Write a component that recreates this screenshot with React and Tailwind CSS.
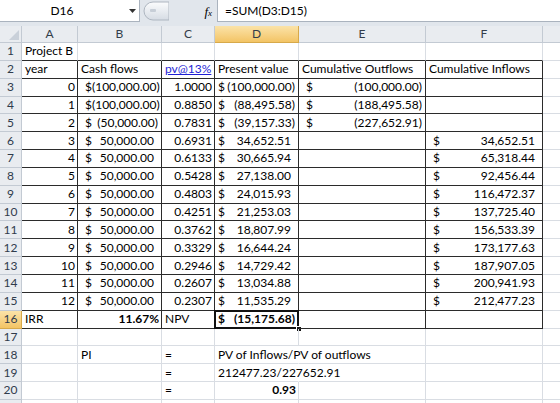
import React from 'react';

const FONT = { fontFamily: 'Lato, "Liberation Sans", sans-serif' };

const colW = ['w-[56px]', 'w-[84px]', 'w-[53px]', 'w-[84px]', 'w-[127px]', 'w-[117px]', 'w-[80px]'];
const letters = ['A', 'B', 'C', 'D', 'E', 'F', 'G'];

const years = [0, 1, 2, 3, 4, 5, 6, 7, 8, 9, 10, 11, 12];
const cash = ['(100,000.00)', '(100,000.00)', '(50,000.00)'];
const pvf = ['1.0000', '0.8850', '0.7831', '0.6931', '0.6133', '0.5428', '0.4803', '0.4251', '0.3762', '0.3329', '0.2946', '0.2607', '0.2307'];
const pv = ['(100,000.00)', '(88,495.58)', '(39,157.33)', '34,652.51', '30,665.94', '27,138.00', '24,015.93', '21,253.03', '18,807.99', '16,644.24', '14,729.42', '13,034.88', '11,535.29'];
const outflows = ['(100,000.00)', '(188,495.58)', '(227,652.91)'];
const inflows = ['34,652.51', '65,318.44', '92,456.44', '116,472.37', '137,725.40', '156,533.39', '173,177.63', '187,907.05', '200,941.93', '212,477.23'];

const money = (v, wide) => ({ money: v, neg: v.startsWith('('), wide });

const buildRows = () => {
    const rows = [];
    rows.push([{ t: 'Project B' }]);
    rows.push([
        { t: 'year' },
        { t: 'Cash flows' },
        { t: 'pv@13%', link: true },
        { t: 'Present value' },
        { t: 'Cumulative Outflows' },
        { t: 'Cumulative Inflows' },
    ]);
    years.forEach((y, i) => {
        rows.push([
            { t: String(y), r: true },
            money(i < 3 ? cash[i] : '50,000.00'),
            { t: pvf[i], r: true },
            money(pv[i], true),
            i < 3 ? money(outflows[i]) : {},
            i >= 3 ? money(inflows[i - 3]) : {},
        ]);
    });
    rows.push([
        { t: 'IRR' },
        { t: '11.67%', r: true, b: true },
        { t: 'NPV' },
        { ...money('(15,175.68)', true), b: true, sel: true },
        {},
        {},
    ]);
    rows.push([]);
    rows.push([{}, { t: 'PI' }, { t: '=' }, { t: 'PV of Inflows/PV of outflows', spill: true }]);
    rows.push([{}, {}, { t: '=' }, { t: '212477.23/227652.91', spill: true }]);
    rows.push([{}, {}, { t: '=' }, { t: '0.93', r: true, b: true }]);
    rows.push([]);
    return rows;
};

const Cell = ({ cell = {}, col, rowNo }) => {
    const inTable = col < 6 && rowNo >= 2 && rowNo <= 16;
    const aboveTable = col < 6 && rowNo === 1;
    let border = 'border-r border-b border-[#d9dde3]';
    if (inTable) border = 'border-r border-b border-[#2b2b2b]';
    else if (aboveTable) border = 'border-r border-b border-r-[#d9dde3] border-b-[#2b2b2b]';
    if (cell.spill) border = 'border-r border-b border-r-transparent border-b-[#d9dde3]';

    let content = null;
    if (cell.money) {
        const padL = cell.wide ? 'pl-[3px]' : 'pl-[7px]';
        const padR = cell.neg ? 'pr-[3px]' : 'pr-[7px]';
        content = (
            <div className={`flex justify-between w-full whitespace-nowrap ${padL} ${padR}`}>
                <span>$</span>
                <span>{cell.money}</span>
            </div>
        );
    } else if (cell.t) {
        content = (
            <div className={`w-full whitespace-nowrap ${cell.r ? 'text-right pr-[2px]' : 'pl-[3px]'} ${cell.link ? 'text-[#1f1fd6] underline' : ''}`}>
                {cell.t}
            </div>
        );
    }

    return (
        <div className={`relative shrink-0 h-full flex items-center ${colW[col]} ${border} ${cell.b ? 'font-bold' : ''}`}>
            {content}
            {cell.sel && (
                <>
                    <div className="absolute -left-px -top-px -right-px -bottom-px border-2 border-[#111]" />
                    <div className="absolute -right-[4px] -bottom-[4px] w-[6px] h-[6px] bg-[#111] border border-white" />
                </>
            )}
        </div>
    );
};

const App = () => {
    const rows = buildRows();
    return (
        <div className="w-[560px] h-[403px] overflow-hidden bg-white text-[12px] text-black" style={FONT}>
            {/* formula bar */}
            <div className="h-[26px] bg-[#e1e6ec] flex items-start">
                <div className="w-[140px] h-[22px] bg-white border-r border-b border-[#aab3be] flex items-center relative">
                    <span className="w-[124px] text-center text-[12px]">D16</span>
                    <svg className="absolute left-[129px] top-[9px]" width="7" height="4" viewBox="0 0 7 4">
                        <path d="M0 0 H7 L3.5 4 Z" fill="#333" />
                    </svg>
                </div>
                <svg className="ml-[3px] mt-[1px]" width="26" height="20" viewBox="0 0 26 20">
                    <defs>
                        <linearGradient id="knob" x1="0" y1="0" x2="0" y2="1">
                            <stop offset="0" stopColor="#fbfcfd" />
                            <stop offset="1" stopColor="#d6dce4" />
                        </linearGradient>
                    </defs>
                    <path d="M10 1 H26 V19 H10 A9 9 0 0 1 10 1 Z" fill="url(#knob)" stroke="#aeb6c0" />
                    <rect x="7" y="8" width="6" height="3" rx="1" fill="#c7ced7" />
                </svg>
                <div className="w-[48px] h-[22px] flex items-center justify-end pr-[5px]">
                    <span className="italic text-[13px] leading-none" style={{ fontFamily: '"Liberation Serif", serif' }}>
                        f<span className="text-[9px]">x</span>
                    </span>
                </div>
                <div className="flex-1 h-[22px] bg-white border-l border-b border-[#aab3be] flex items-center pl-[7px] text-[12px]">
                    =SUM(D3:D15)
                </div>
            </div>

            {/* column headers */}
            <div className="h-[17px] flex bg-[#e9ecf0] text-[#333d4a]">
                <div className="w-[22px] shrink-0 h-full border-r border-b border-[#c3cad3] relative">
                    <svg className="absolute right-[2px] bottom-[2px]" width="10" height="10" viewBox="0 0 10 10">
                        <path d="M10 0 V10 H0 Z" fill="#c9d0d9" />
                    </svg>
                </div>
                {letters.map((l, i) => (
                    <div
                        key={l}
                        className={`${colW[i]} shrink-0 h-full flex items-center justify-center border-r border-b ${i === 3 ? 'bg-gradient-to-b from-[#fbe3a8] to-[#f3c464] border-[#d7a94a]' : 'border-[#c3cad3]'}`}
                    >
                        {i < 6 ? l : ''}
                    </div>
                ))}
            </div>

            {/* grid rows */}
            {rows.map((row, ri) => {
                const rowNo = ri + 1;
                return (
                    <div key={rowNo} className="h-[17.85px] flex">
                        <div
                            className={`w-[22px] shrink-0 h-full flex items-center justify-center border-r border-b text-[#2f3b4c] ${rowNo === 16 ? 'bg-gradient-to-b from-[#fbe3a8] to-[#f3c464] border-[#d7a94a]' : 'bg-[#e9ecf0] border-[#c3cad3]'}`}
                        >
                            {rowNo <= 20 ? rowNo : ''}
                        </div>
                        {letters.map((l, ci) => (
                            <Cell key={l} cell={row[ci]} col={ci} rowNo={rowNo} />
                        ))}
                    </div>
                );
            })}
        </div>
    );
};

export default App;
